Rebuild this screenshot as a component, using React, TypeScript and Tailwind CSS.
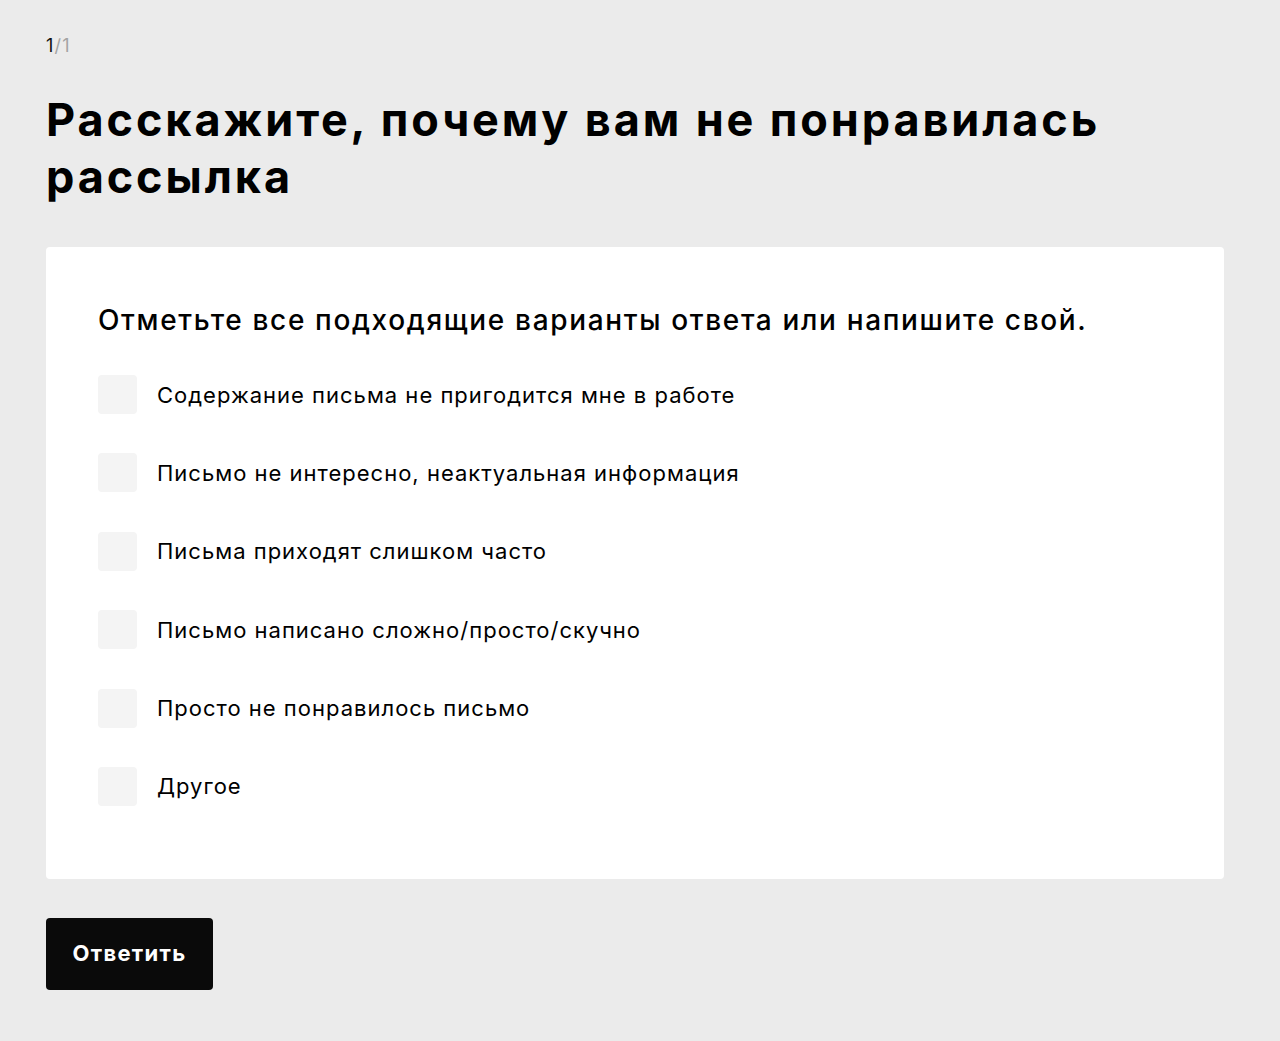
import React from "react";

const options = [
  "Содержание письма не пригодится мне в работе",
  "Письмо не интересно, неактуальная информация",
  "Письма приходят слишком часто",
  "Письмо написано сложно/просто/скучно",
  "Просто не понравилось письмо",
  "Другое",
];

export default function App() {
  return (
    <div
      className="min-h-[1041px] w-full bg-[#ebebeb] pl-[46px] pt-[34px] pb-[51px] text-black"
      style={{ fontFamily: "Inter, 'Noto Sans', sans-serif" }}
    >
      <div className="text-[18px] leading-[24px] tracking-[1.2px]">
        <span className="text-[#111]">1</span>
        <span className="text-[#a3a3a3]">/1</span>
      </div>

      <h1 className="mt-[33px] w-[1120px] text-[45px] font-bold leading-[57px] tracking-[2.9px]">
        Расскажите, почему вам не понравилась рассылка
      </h1>

      <div className="mt-[42px] w-[1178px] rounded-[4px] bg-white pl-[52px] pt-[56px] pb-[73px]">
        <p className="text-[28px] font-medium leading-[34px] tracking-[1.65px]">
          Отметьте все подходящие варианты ответа или напишите свой.
        </p>
        <div className="mt-[38px] flex flex-col gap-[39.4px]">
          {options.map((label) => (
            <label key={label} className="flex h-[39px] cursor-pointer items-center">
              <span className="h-[39px] w-[39px] shrink-0 rounded-[4px] bg-[#f4f4f4]" />
              <span className="ml-[20px] text-[22px] leading-[28px] tracking-[1px]">{label}</span>
            </label>
          ))}
        </div>
      </div>

      <button className="mt-[39px] flex h-[72px] w-[167px] items-center justify-center rounded-[4px] bg-[#0a0a0a] text-[22px] font-bold tracking-[1.3px] text-white">
        Ответить
      </button>
    </div>
  );
}
